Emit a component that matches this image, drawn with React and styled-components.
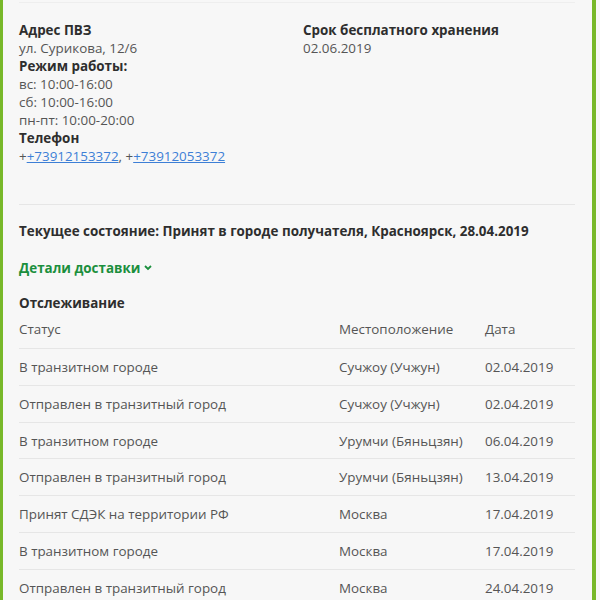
import React from 'react';
import styled, { createGlobalStyle } from 'styled-components';

const GlobalStyle = createGlobalStyle`
    html, body {
        margin: 0;
        padding: 0;
        background: #f7f7f7;
    }
    body {
        font-family: "Open Sans", "Liberation Sans", sans-serif;
        font-size: 13.4px;
        line-height: 18px;
        color: #555;
    }
`;

const Panel = styled.div`
    width: 596px;
    box-sizing: border-box;
    border-left: 3px solid #78b82a;
    border-right: 4px solid #78b82a;
    padding: 2px 17px 0 16px;
    background: #f7f7f7;
`;

const Divider = styled.div`
    height: 1px;
    background: ${(p) => (p.$light ? '#eeeeee' : '#e6e6e6')};
`;

const InfoGrid = styled.div`
    display: grid;
    grid-template-columns: 284px 1fr;
    padding: 18px 0 39px;
`;

const InfoBlock = styled.div`
    display: flex;
    flex-direction: column;
`;

const Label = styled.div`
    font-weight: 700;
    color: #2e2e2e;
`;

const Value = styled.div`
    color: #555;
`;

const PhoneLink = styled.a`
    color: #3d7fd6;
    text-decoration: underline;
`;

const Status = styled.div`
    margin-top: 17px;
    font-weight: 700;
    color: #2e2e2e;
`;

const DetailsToggle = styled.a`
    display: inline-flex;
    align-items: center;
    gap: 4px;
    margin-top: 19px;
    font-weight: 700;
    color: #1b8f3d;
    text-decoration: none;
    cursor: pointer;
`;

const SectionTitle = styled.div`
    margin-top: 17px;
    font-weight: 700;
    color: #2e2e2e;
`;

const Table = styled.div`
    display: flex;
    flex-direction: column;
    margin-top: 8px;
`;

const Row = styled.div`
    display: grid;
    grid-template-columns: 320px 146px 1fr;
    padding: ${(p) => (p.$head ? '0 0 10px' : '9px 0 8.8px')};
    border-top: ${(p) => (p.$head ? 'none' : '1px solid #e6e6e6')};
    color: #555;
`;

const Cell = styled.div`
    white-space: nowrap;
`;

const Chevron = () => (
    <svg width="8" height="6" viewBox="0 0 8 6" fill="none">
        <polyline points="1,1 4,4 7,1" stroke="#1b8f3d" strokeWidth="1.8" />
    </svg>
);

const tracking = [
    ['В транзитном городе', 'Сучжоу (Учжун)', '02.04.2019'],
    ['Отправлен в транзитный город', 'Сучжоу (Учжун)', '02.04.2019'],
    ['В транзитном городе', 'Урумчи (Бяньцзян)', '06.04.2019'],
    ['Отправлен в транзитный город', 'Урумчи (Бяньцзян)', '13.04.2019'],
    ['Принят СДЭК на территории РФ', 'Москва', '17.04.2019'],
    ['В транзитном городе', 'Москва', '17.04.2019'],
    ['Отправлен в транзитный город', 'Москва', '24.04.2019'],
];

const App = () => {
    return (
        <>
            <GlobalStyle />
            <Panel>
                <Divider $light />
                <InfoGrid>
                    <InfoBlock>
                        <Label>Адрес ПВЗ</Label>
                        <Value>ул. Сурикова, 12/6</Value>
                        <Label>Режим работы:</Label>
                        <Value>вс: 10:00-16:00</Value>
                        <Value>сб: 10:00-16:00</Value>
                        <Value>пн-пт: 10:00-20:00</Value>
                        <Label>Телефон</Label>
                        <Value>
                            +<PhoneLink href="#">+73912153372</PhoneLink>, +
                            <PhoneLink href="#">+73912053372</PhoneLink>
                        </Value>
                    </InfoBlock>
                    <InfoBlock>
                        <Label>Срок бесплатного хранения</Label>
                        <Value>02.06.2019</Value>
                    </InfoBlock>
                </InfoGrid>
                <Divider />
                <Status>Текущее состояние: Принят в городе получателя, Красноярск, 28.04.2019</Status>
                <DetailsToggle>
                    Детали доставки <Chevron />
                </DetailsToggle>
                <SectionTitle>Отслеживание</SectionTitle>
                <Table>
                    <Row $head>
                        <Cell>Статус</Cell>
                        <Cell>Местоположение</Cell>
                        <Cell>Дата</Cell>
                    </Row>
                    {tracking.map((item, i) => (
                        <Row key={i}>
                            <Cell>{item[0]}</Cell>
                            <Cell>{item[1]}</Cell>
                            <Cell>{item[2]}</Cell>
                        </Row>
                    ))}
                </Table>
            </Panel>
        </>
    );
};

export default App;
